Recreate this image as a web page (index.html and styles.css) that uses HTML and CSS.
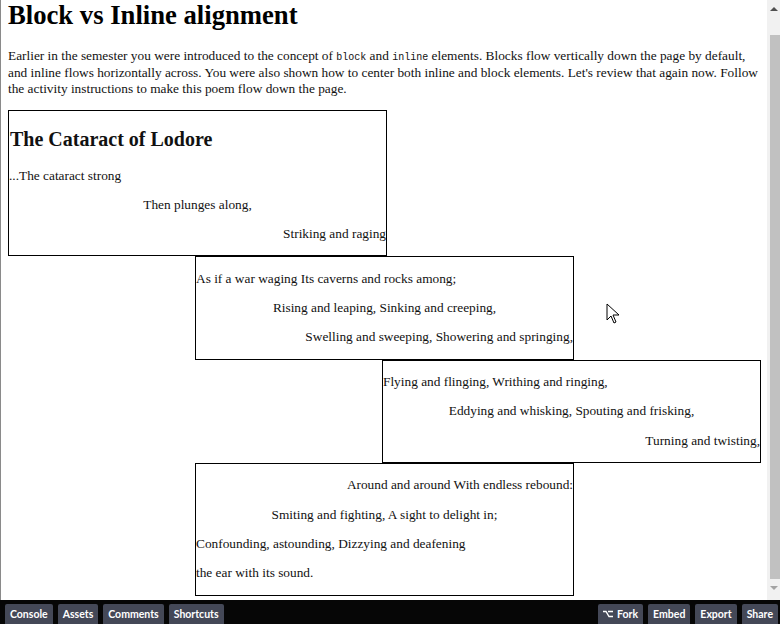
FILE: index.html
```html
<!DOCTYPE html>
<html>
<head>
<meta charset="utf-8">
<link rel="stylesheet" href="styles.css">
</head>
<body>
<div class="app">
  <div class="stage">
    <div class="frame">
      <div class="page">
        <h1 class="title">Block vs Inline alignment</h1>
        <p class="intro">Earlier in the semester you were introduced to the concept of <code>block</code> and <code>inline</code> elements. Blocks flow vertically down the page by default, and inline flows horizontally across. You were also shown how to center both inline and block elements. Let's review that again now. Follow the activity instructions to make this poem flow down the page.</p>
        <div class="stanza s1">
          <h2 class="poem-title">The Cataract of Lodore</h2>
          <p class="left">...The cataract strong</p>
          <p class="center">Then plunges along,</p>
          <p class="right">Striking and raging</p>
        </div>
        <div class="stanza s2">
          <p class="left">As if a war waging Its caverns and rocks among;</p>
          <p class="center">Rising and leaping, Sinking and creeping,</p>
          <p class="right">Swelling and sweeping, Showering and springing,</p>
        </div>
        <div class="stanza s3">
          <p class="left">Flying and flinging, Writhing and ringing,</p>
          <p class="center">Eddying and whisking, Spouting and frisking,</p>
          <p class="right">Turning and twisting,</p>
        </div>
        <div class="stanza s4">
          <p class="right">Around and around With endless rebound:</p>
          <p class="center">Smiting and fighting, A sight to delight in;</p>
          <p class="left">Confounding, astounding, Dizzying and deafening</p>
          <p class="left">the ear with its sound.</p>
        </div>
      </div>
      <svg class="cursor" width="16" height="24" viewBox="0 0 16 24"><path d="M1 1 L1 17 L5 13 L8 20 L10 19 L7 12 L13 12 Z" fill="#fff" stroke="#000" stroke-width="1"/></svg>
    </div>
    <div class="scrollbar">
      <div class="arrow up"></div>
      <div class="thumb"></div>
      <div class="arrow down"></div>
    </div>
  </div>
  <div class="bar">
    <div class="group">
      <span class="btn">Console</span>
      <span class="btn">Assets</span>
      <span class="btn">Comments</span>
      <span class="btn">Shortcuts</span>
    </div>
    <div class="group">
      <span class="btn"><svg class="fork" width="10" height="8" viewBox="0 0 10 8"><path d="M0 1.5 H3 L6 6.5 H10 M5 1.5 H10" fill="none" stroke="#fff" stroke-width="1.4"/></svg>Fork</span>
      <span class="btn">Embed</span>
      <span class="btn">Export</span>
      <span class="btn">Share</span>
    </div>
  </div>
</div>
</body>
</html>
```
FILE: styles.css
```css
html, body {
  margin: 0;
  padding: 0;
  height: 100%;
  overflow: hidden;
}
.app {
  display: flex;
  flex-direction: column;
  height: 624px;
  width: 780px;
}
.stage {
  display: flex;
  height: 600px;
  background: #fff;
}
.frame {
  position: relative;
  flex: 1;
  overflow: hidden;
  border-left: 1px solid #8a8a8a;
}
.page {
  margin-left: 7px;
  margin-right: 6px;
  font-family: "Liberation Serif", "Times New Roman", serif;
  font-size: 13.33px;
  color: #111;
}
.title {
  font-size: 26.67px;
  line-height: 30px;
  margin: 0 0 18px;
  color: #000;
}
.intro {
  line-height: 16.5px;
  margin: 0 0 12px;
}
.intro code {
  font-family: "Liberation Mono", "Courier New", monospace;
  font-size: 10px;
  line-height: 1;
}
.stanza {
  border: 1px solid #000;
  box-sizing: border-box;
  width: 379px;
}
.stanza p {
  margin: 13.33px 0;
  line-height: 16px;
}
.poem-title {
  font-size: 20px;
  line-height: 23px;
  margin: 17px 0 17px 1px;
  color: #111;
}
.s2 { margin-left: 187px; }
.s3 { margin-left: auto; }
.s4 { margin-left: auto; margin-right: auto; }
.left { text-align: left; }
.center { text-align: center; }
.right { text-align: right; }
.cursor {
  position: absolute;
  left: 605px;
  top: 303px;
}
.scrollbar {
  width: 13px;
  background: #f1f1f1;
  display: flex;
  flex-direction: column;
  align-items: center;
}
.arrow {
  width: 0;
  height: 0;
  border-left: 4px solid transparent;
  border-right: 4px solid transparent;
}
.arrow.up {
  border-bottom: 4px solid #505050;
  margin: 7px 0 24px;
}
.arrow.down {
  border-top: 4px solid #a3a3a3;
  margin: 7px 0 0;
}
.thumb {
  width: 10px;
  height: 544px;
  background: #c1c1c1;
  margin-left: 2px;
}
.bar {
  height: 24px;
  background: #060606;
  display: flex;
  justify-content: space-between;
  align-items: flex-end;
  padding: 0 2px 0 5px;
}
.group {
  display: flex;
  gap: 5px;
}
.btn {
  display: flex;
  align-items: center;
  gap: 4px;
  height: 20px;
  padding: 0 5px;
  background: #444857;
  color: #fff;
  font-family: Lato, "Noto Sans", sans-serif;
  font-size: 10.5px;
  font-weight: 700;
  border-radius: 2px 2px 0 0;
}
.fork { display: block; }
```
